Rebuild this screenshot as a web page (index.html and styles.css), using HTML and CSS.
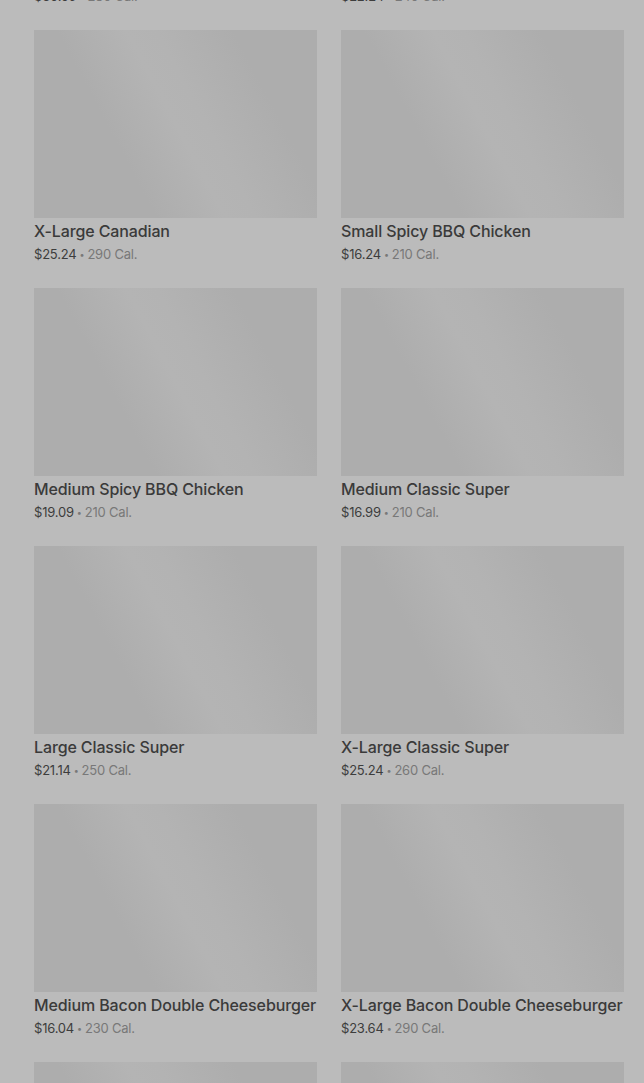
FILE: index.html
```html
<!DOCTYPE html>
<html lang="en">
<head>
    <meta charset="UTF-8">
    <meta name="viewport" content="width=device-width, initial-scale=1.0">
    <title>Menu</title>
    <link rel="stylesheet" href="styles.css">
</head>
<body>
    <div class="menu">
        <div class="grid">
            <div class="card">
                <div class="thumb"></div>
                <p class="name">Large Canadian</p>
                <p class="meta">$30.09<span class="dot">•</span><span class="cal">280 Cal.</span></p>
            </div>
            <div class="card">
                <div class="thumb"></div>
                <p class="name">Small Canadian</p>
                <p class="meta">$22.24<span class="dot">•</span><span class="cal">240 Cal.</span></p>
            </div>

            <div class="card">
                <div class="thumb"></div>
                <p class="name">X-Large Canadian</p>
                <p class="meta">$25.24<span class="dot">•</span><span class="cal">290 Cal.</span></p>
            </div>
            <div class="card">
                <div class="thumb"></div>
                <p class="name">Small Spicy BBQ Chicken</p>
                <p class="meta">$16.24<span class="dot">•</span><span class="cal">210 Cal.</span></p>
            </div>

            <div class="card">
                <div class="thumb"></div>
                <p class="name">Medium Spicy BBQ Chicken</p>
                <p class="meta">$19.09<span class="dot">•</span><span class="cal">210 Cal.</span></p>
            </div>
            <div class="card">
                <div class="thumb"></div>
                <p class="name">Medium Classic Super</p>
                <p class="meta">$16.99<span class="dot">•</span><span class="cal">210 Cal.</span></p>
            </div>

            <div class="card">
                <div class="thumb"></div>
                <p class="name">Large Classic Super</p>
                <p class="meta">$21.14<span class="dot">•</span><span class="cal">250 Cal.</span></p>
            </div>
            <div class="card">
                <div class="thumb"></div>
                <p class="name">X-Large Classic Super</p>
                <p class="meta">$25.24<span class="dot">•</span><span class="cal">260 Cal.</span></p>
            </div>

            <div class="card">
                <div class="thumb"></div>
                <p class="name">Medium Bacon Double Cheeseburger</p>
                <p class="meta">$16.04<span class="dot">•</span><span class="cal">230 Cal.</span></p>
            </div>
            <div class="card">
                <div class="thumb"></div>
                <p class="name">X-Large Bacon Double Cheeseburger</p>
                <p class="meta">$23.64<span class="dot">•</span><span class="cal">290 Cal.</span></p>
            </div>

            <div class="card">
                <div class="thumb"></div>
                <p class="name">Small Hawaiian</p>
                <p class="meta">$15.24<span class="dot">•</span><span class="cal">200 Cal.</span></p>
            </div>
            <div class="card">
                <div class="thumb"></div>
                <p class="name">Large Hawaiian</p>
                <p class="meta">$22.14<span class="dot">•</span><span class="cal">250 Cal.</span></p>
            </div>
        </div>
    </div>
</body>
</html>
```

FILE: styles.css
```css
html,
body {
    margin: 0;
    height: 100%;
    overflow: hidden;
    background: #bbbbbb;
}

body {
    font-family: Inter, "Liberation Sans", sans-serif;
    color: #3a3a3a;
}

.menu {
    padding: 0 20px 0 34px;
}

/* list is scrolled, first row sits above the fold */
.grid {
    display: grid;
    grid-template-columns: 283px 283px;
    column-gap: 24px;
    row-gap: 24px;
    margin-top: -228px;
}

.thumb {
    height: 188px;
    background: linear-gradient(62deg, #adadad 0%, #adadad 32%, #b4b4b4 50%, #b3b3b3 58%, #adadad 78%, #adadad 100%);
}

.name {
    margin: 0;
    padding-top: 2px;
    font-size: 16px;
    font-weight: 500;
    line-height: 22px;
    letter-spacing: -0.12px;
    white-space: nowrap;
    color: #3a3a3a;
}

.meta {
    margin: 2px 0 0;
    height: 20px;
    font-size: 13px;
    line-height: 20px;
    letter-spacing: -0.2px;
    color: #3d3d3d;
}

.dot {
    margin: 0 3px;
    font-size: 9px;
    line-height: 1;
    color: #787878;
    vertical-align: 1px;
}

.cal {
    color: #787878;
}
```
